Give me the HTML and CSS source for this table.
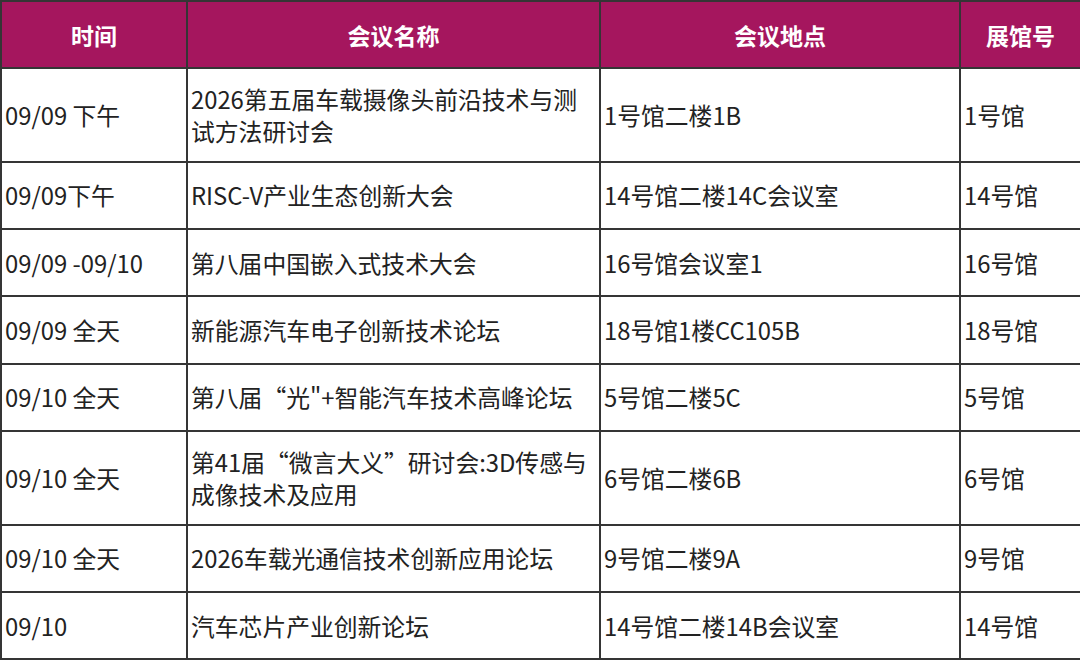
FILE: index.html
```html
<!DOCTYPE html>
<html lang="zh">
<head>
<meta charset="utf-8">
<link rel="stylesheet" href="styles.css">
</head>
<body>
<table class="schedule">
  <colgroup>
    <col class="c-time">
    <col class="c-name">
    <col class="c-place">
    <col class="c-hall">
  </colgroup>
  <thead>
    <tr class="head">
      <th>时间</th>
      <th>会议名称</th>
      <th>会议地点</th>
      <th>展馆号</th>
    </tr>
  </thead>
  <tbody>
    <tr class="tall">
      <td>09/09 下午</td>
      <td>2026第五届车载摄像头前沿技术与测试方法研讨会</td>
      <td>1号馆二楼1B</td>
      <td>1号馆</td>
    </tr>
    <tr class="single">
      <td>09/09下午</td>
      <td>RISC-V产业生态创新大会</td>
      <td>14号馆二楼14C会议室</td>
      <td>14号馆</td>
    </tr>
    <tr class="single">
      <td>09/09 -09/10</td>
      <td>第八届中国嵌入式技术大会</td>
      <td>16号馆会议室1</td>
      <td>16号馆</td>
    </tr>
    <tr class="single">
      <td>09/09 全天</td>
      <td>新能源汽车电子创新技术论坛</td>
      <td>18号馆1楼CC105B</td>
      <td>18号馆</td>
    </tr>
    <tr class="single">
      <td>09/10 全天</td>
      <td>第八届“光"+智能汽车技术高峰论坛</td>
      <td>5号馆二楼5C</td>
      <td>5号馆</td>
    </tr>
    <tr class="tall">
      <td>09/10 全天</td>
      <td>第41届“微言大义”研讨会:3D传感与成像技术及应用</td>
      <td>6号馆二楼6B</td>
      <td>6号馆</td>
    </tr>
    <tr class="single">
      <td>09/10 全天</td>
      <td>2026车载光通信技术创新应用论坛</td>
      <td>9号馆二楼9A</td>
      <td>9号馆</td>
    </tr>
    <tr class="single">
      <td>09/10</td>
      <td>汽车芯片产业创新论坛</td>
      <td>14号馆二楼14B会议室</td>
      <td>14号馆</td>
    </tr>
  </tbody>
</table>
</body>
</html>
```

FILE: styles.css
```css
html, body {
  margin: 0;
  padding: 0;
  background: #ffffff;
}

body {
  font-family: "Noto Sans CJK SC", "Noto Sans", sans-serif;
  color: #222222;
}

.schedule {
  width: 1080px;
  border-collapse: collapse;
  table-layout: fixed;
  font-size: 23.8px;
  line-height: 32px;
}

.c-time { width: 186px; }
.c-name { width: 413px; }
.c-place { width: 360px; }
.c-hall { width: 121px; }

.schedule th,
.schedule td {
  border: 2px solid #353535;
  padding: 0 6px 0 3px;
  vertical-align: middle;
  text-align: left;
  word-break: break-all;
}

.schedule th {
  background: #a5165e;
  color: #ffffff;
  font-weight: 700;
  text-align: center;
  font-size: 23px;
  padding: 0 3px;
}

.head { height: 67px; }
.single { height: 67.4px; }
.tall { height: 93.5px; }
```
